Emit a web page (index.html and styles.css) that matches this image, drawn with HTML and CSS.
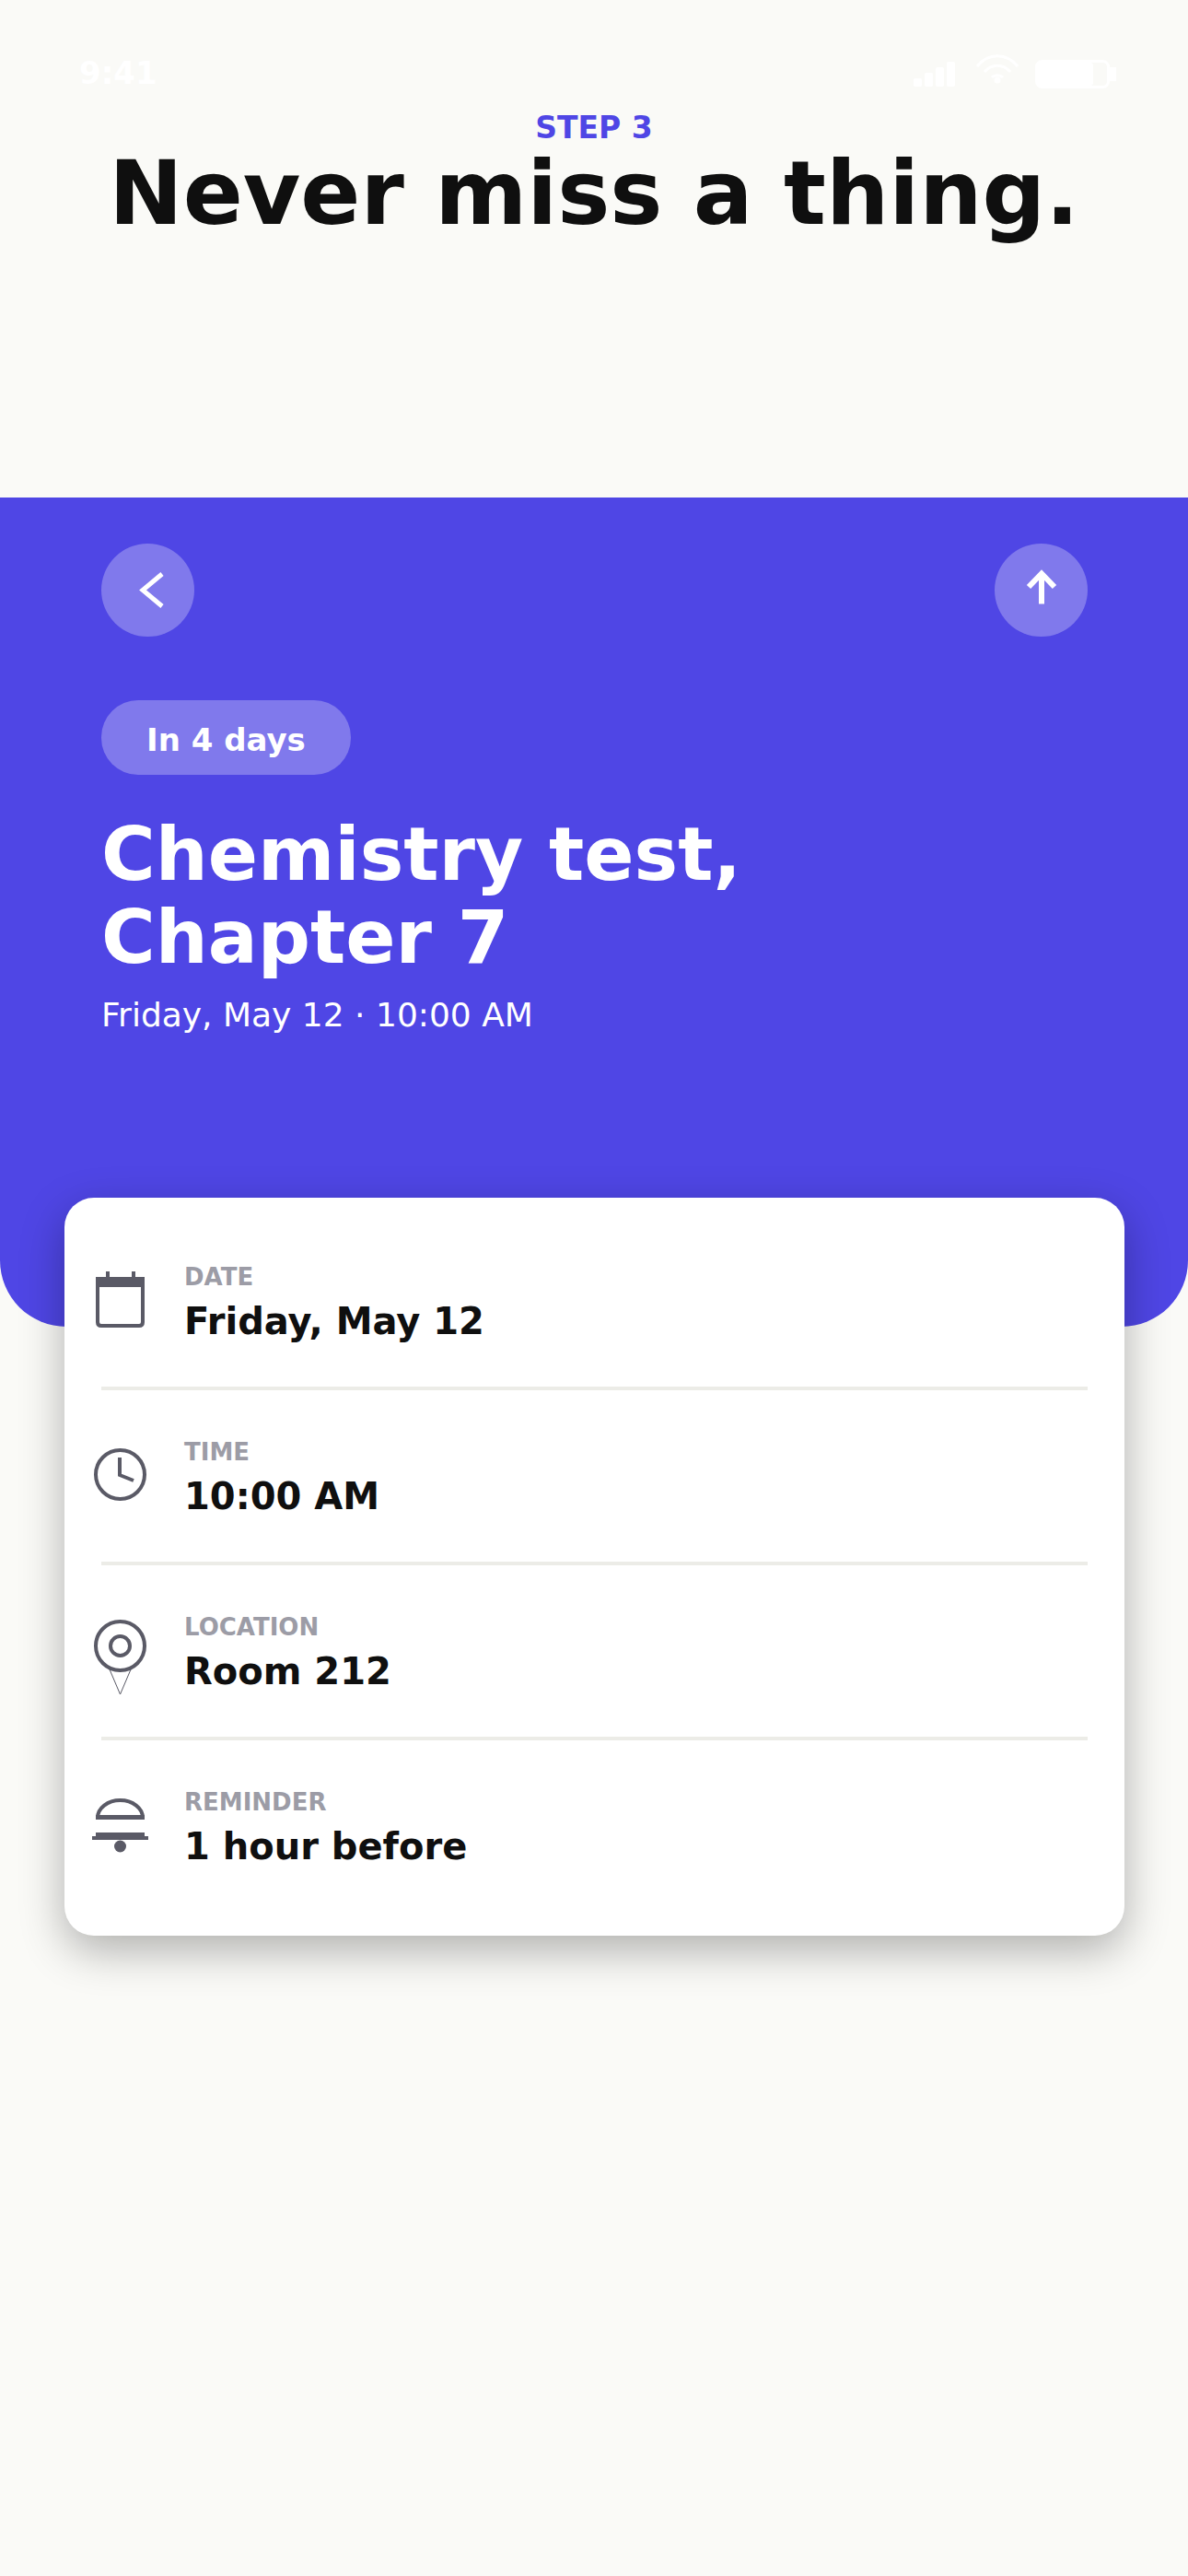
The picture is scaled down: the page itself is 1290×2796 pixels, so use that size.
FILE: index.html
```html
<!DOCTYPE html>
<html lang="en">
<head>
  <meta charset="UTF-8">
  <meta name="viewport" content="width=device-width, initial-scale=1.0">
  <title>Never miss a thing</title>
  <link rel="stylesheet" href="styles.css">
</head>
<body>
  <div class="status-bar">
    <span class="time">9:41</span>
    <div class="status-icons">
      <svg class="icon-signal" width="45" height="27" viewBox="0 0 45 27" fill="#fff">
        <rect x="0" y="18" width="9" height="9" rx="2"/>
        <rect x="12" y="12" width="9" height="15" rx="2"/>
        <rect x="24" y="6" width="9" height="21" rx="2"/>
        <rect x="36" y="0" width="9" height="27" rx="2"/>
      </svg>
      <svg class="icon-wifi" width="46" height="44" viewBox="0 0 46 44" fill="none" stroke="#fff" stroke-width="3">
        <path d="M1 14C13 -1 33 -1 45 14"/>
        <path d="M9 20C17 11 29 11 37 20"/>
        <path d="M17 26C20 23 26 23 29 26"/>
        <circle cx="23" cy="29" r="3.5" fill="#fff" stroke="none"/>
      </svg>
      <svg class="icon-battery" width="88" height="32" viewBox="0 0 88 32" fill="#fff">
        <rect x="1.5" y="2.5" width="78" height="28" rx="6" fill="none" stroke="#fff" stroke-width="3"/>
        <rect x="2" y="4" width="61" height="25" rx="3"/>
        <rect x="81" y="9" width="7" height="15"/>
      </svg>
    </div>
  </div>

  <header class="intro">
    <p class="step">STEP 3</p>
    <h1>Never miss a thing.</h1>
  </header>

  <section class="hero">
    <div class="hero-nav">
      <button class="round-btn">
        <svg width="34" height="44" viewBox="0 0 34 44" fill="none" stroke="#fff" stroke-width="5">
          <path d="M32 4L11 21.5L32 39"/>
        </svg>
      </button>
      <button class="round-btn">
        <svg width="34" height="46" viewBox="0 0 34 46" fill="none" stroke="#fff" stroke-width="6">
          <path d="M17 37.5V4"/>
          <path d="M3 19L17 4.5L31 19"/>
        </svg>
      </button>
    </div>
    <span class="pill">In 4 days</span>
    <h2>Chemistry test,<br>Chapter 7</h2>
    <p class="when">Friday, May 12 · 10:00 AM</p>
  </section>

  <section class="card">
    <div class="row">
      <svg class="row-icon icon-calendar" width="62" height="62" viewBox="0 0 62 62" fill="none" stroke="#5a5a66" stroke-width="4">
        <path d="M6 8H55V55Q55 59 51 59H10Q6 59 6 55Z"/>
        <rect x="4" y="6" width="53" height="11" fill="#5a5a66" stroke="none"/>
        <path d="M17 0V6M45 0V6"/>
      </svg>
      <div class="row-text">
        <span class="row-label">DATE</span>
        <span class="row-value">Friday, May 12</span>
      </div>
    </div>
    <div class="row">
      <svg class="row-icon" width="62" height="62" viewBox="0 0 62 62" fill="none" stroke="#5a5a66" stroke-width="4">
        <circle cx="30.5" cy="29.5" r="26.5"/>
        <path d="M30 11V30L45 36"/>
      </svg>
      <div class="row-text">
        <span class="row-label">TIME</span>
        <span class="row-value">10:00 AM</span>
      </div>
    </div>
    <div class="row">
      <svg class="row-icon icon-pin" width="62" height="84" viewBox="0 0 62 84" fill="none" stroke="#5a5a66" stroke-width="4">
        <circle cx="30.5" cy="28.5" r="26.5"/>
        <circle cx="30.5" cy="28.5" r="10.5"/>
        <path d="M19 54L30.5 81L42 54" stroke-width="1"/>
      </svg>
      <div class="row-text">
        <span class="row-label">LOCATION</span>
        <span class="row-value">Room 212</span>
      </div>
    </div>
    <div class="row">
      <svg class="row-icon" width="62" height="62" viewBox="0 0 62 62" fill="#5a5a66">
        <path d="M6 22A24.5 19 0 0 1 55 22" fill="none" stroke="#5a5a66" stroke-width="4"/>
        <rect x="4" y="19" width="53" height="5"/>
        <rect x="4" y="38" width="53" height="4"/>
        <rect x="0" y="42" width="61" height="4"/>
        <circle cx="30.5" cy="53" r="6.5"/>
      </svg>
      <div class="row-text">
        <span class="row-label">REMINDER</span>
        <span class="row-value">1 hour before</span>
      </div>
    </div>
  </section>
</body>
</html>
```

FILE: styles.css
```css
body {
  margin: 0;
  height: 2796px;
  overflow: hidden;
  background-color: #fafaf7;
  color: #0f0f0f;
  font-family: "DejaVu Sans", sans-serif;
}

.status-bar {
  display: flex;
  justify-content: space-between;
  align-items: center;
  height: 34px;
  padding: 63px 78px 0 86px;
  color: #fff;
}

.time {
  margin-bottom: 3px;
  font-size: 34px;
  font-weight: 700;
}

.status-icons {
  display: flex;
  align-items: center;
  gap: 18px;
}

.icon-signal {
  margin-right: 5px;
}

.intro {
  box-sizing: border-box;
  height: 443px;
  padding-top: 22px;
  text-align: center;
}

.step {
  margin: 0;
  color: #4f46e5;
  font-size: 33px;
  font-weight: 700;
  line-height: 40px;
}

h1 {
  margin: 0;
  font-size: 96px;
  line-height: 102px;
  font-weight: 700;
}

.hero {
  box-sizing: border-box;
  height: 900px;
  padding: 50px 109px 0 110px;
  background-color: #4f46e5;
  border-radius: 0 0 72px 72px;
  color: #fff;
}

.hero-nav {
  display: flex;
  justify-content: space-between;
  margin-bottom: 69px;
}

.round-btn {
  display: flex;
  align-items: center;
  justify-content: center;
  width: 101px;
  height: 101px;
  padding: 0;
  border: none;
  border-radius: 50%;
  background-color: rgba(255, 255, 255, 0.28);
}

.pill {
  display: inline-block;
  padding: 0 49px;
  height: 81px;
  line-height: 86px;
  border-radius: 40px;
  background-color: rgba(255, 255, 255, 0.28);
  font-size: 34px;
  font-weight: 700;
}

h2 {
  margin: 42px 0 0;
  font-size: 80px;
  line-height: 90px;
  font-weight: 700;
}

.when {
  margin: 17px 0 0;
  font-size: 36px;
  line-height: 44px;
}

.card {
  box-sizing: border-box;
  position: relative;
  width: 1151px;
  height: 801px;
  margin: -140px 0 0 70px;
  padding: 19px 40px 0;
  background-color: #fff;
  border-radius: 32px;
  box-shadow: 0 16px 48px rgba(0, 0, 0, 0.3);
}

.row {
  box-sizing: border-box;
  display: flex;
  align-items: center;
  height: 190px;
  gap: 38px;
  border-bottom: 4px solid #ecece7;
}

.row:last-child {
  height: 186px;
  border-bottom: none;
}

.row-icon {
  flex: none;
  margin-left: -10px;
}

.icon-calendar {
  margin-bottom: 2px;
}

.icon-pin {
  margin-top: 16px;
}

.row-text {
  display: flex;
  flex-direction: column;
  gap: 7px;
  margin-top: 2px;
}

.row-label {
  color: #9c9ca6;
  font-size: 26px;
  font-weight: 700;
  line-height: 34px;
}

.row-value {
  font-size: 40px;
  font-weight: 700;
  line-height: 48px;
}
```
